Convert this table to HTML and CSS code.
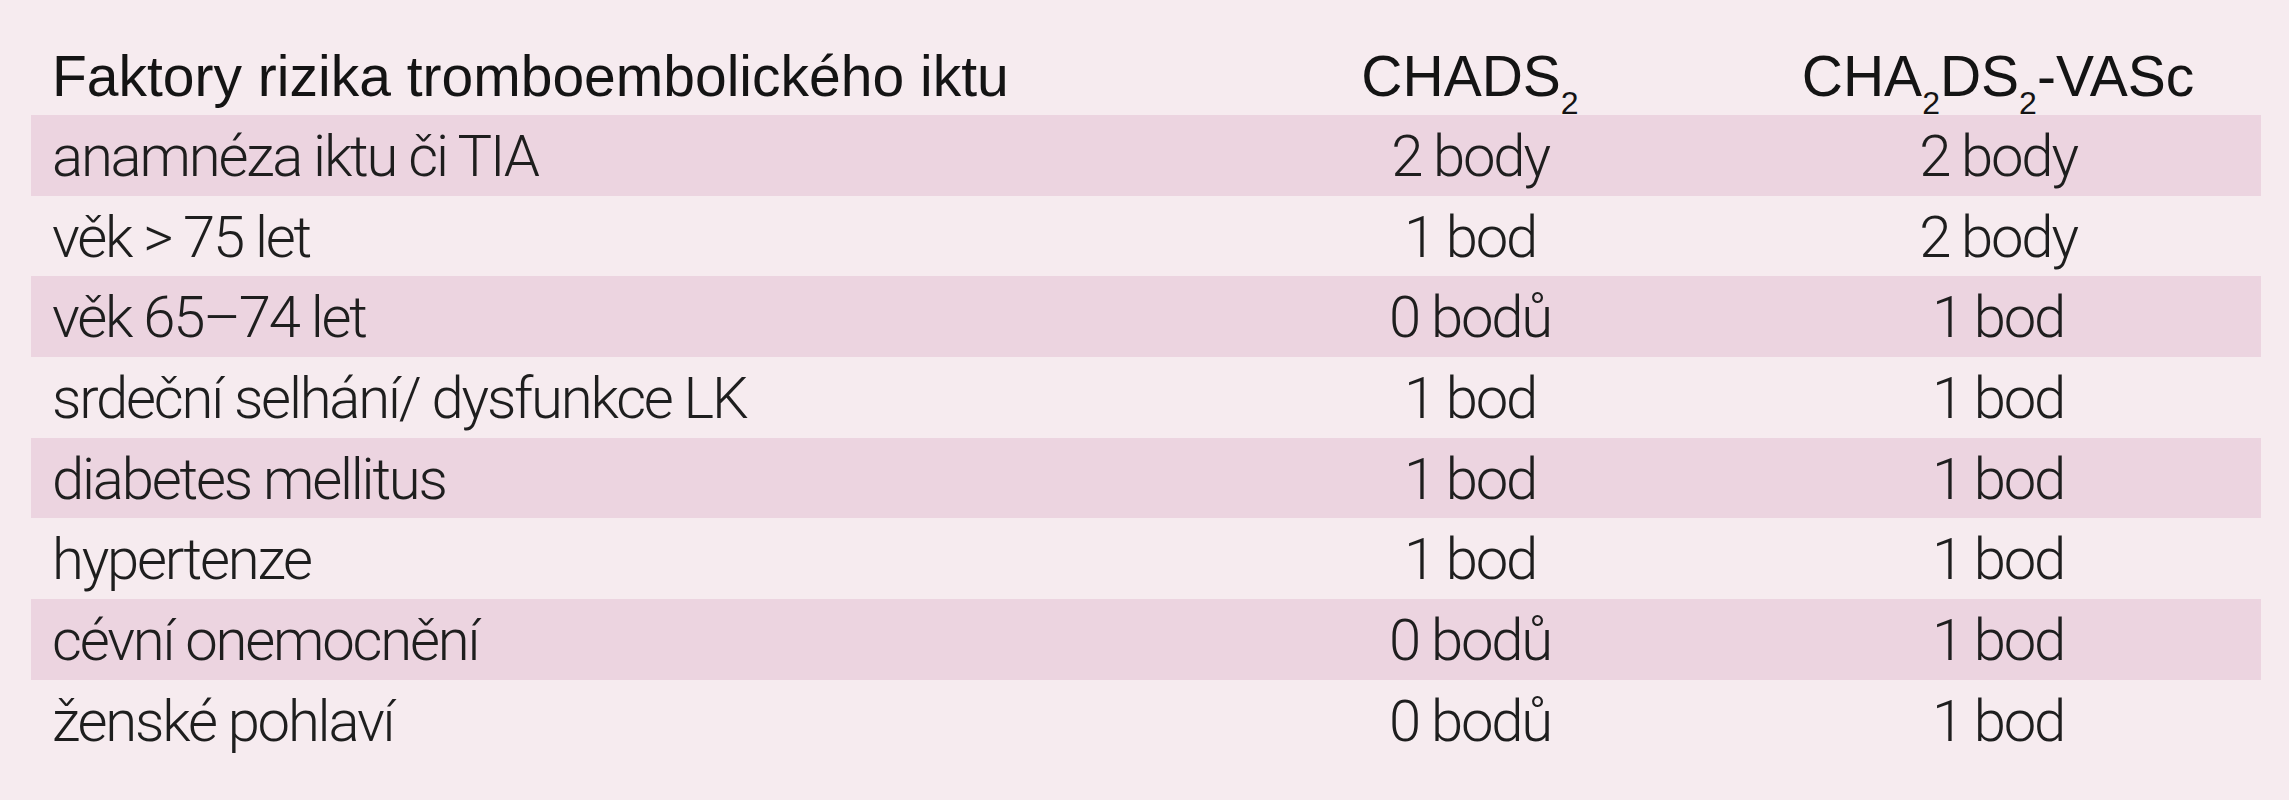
FILE: index.html
```html
<!DOCTYPE html>
<html lang="cs">
<head>
<meta charset="utf-8">
<title>Faktory rizika tromboembolického iktu</title>
<link rel="stylesheet" href="styles.css">
</head>
<body>
<div class="table">
  <div class="row head">
    <div class="cell name">Faktory rizika tromboembolického iktu</div>
    <div class="cell val">CHADS<sub>2</sub></div>
    <div class="cell val">CHA<sub>2</sub>DS<sub>2</sub>-VASc</div>
  </div>
  <div class="row alt">
    <div class="cell name">anamnéza iktu či TIA</div>
    <div class="cell val">2 body</div>
    <div class="cell val">2 body</div>
  </div>
  <div class="row">
    <div class="cell name">věk &gt; 75 let</div>
    <div class="cell val">1 bod</div>
    <div class="cell val">2 body</div>
  </div>
  <div class="row alt">
    <div class="cell name">věk 65–74 let</div>
    <div class="cell val">0 bodů</div>
    <div class="cell val">1 bod</div>
  </div>
  <div class="row">
    <div class="cell name">srdeční selhání/ dysfunkce LK</div>
    <div class="cell val">1 bod</div>
    <div class="cell val">1 bod</div>
  </div>
  <div class="row alt">
    <div class="cell name">diabetes mellitus</div>
    <div class="cell val">1 bod</div>
    <div class="cell val">1 bod</div>
  </div>
  <div class="row">
    <div class="cell name">hypertenze</div>
    <div class="cell val">1 bod</div>
    <div class="cell val">1 bod</div>
  </div>
  <div class="row alt">
    <div class="cell name">cévní onemocnění</div>
    <div class="cell val">0 bodů</div>
    <div class="cell val">1 bod</div>
  </div>
  <div class="row">
    <div class="cell name">ženské pohlaví</div>
    <div class="cell val">0 bodů</div>
    <div class="cell val">1 bod</div>
  </div>
</div>
</body>
</html>
```
FILE: styles.css
```css
html, body {
  margin: 0;
  padding: 0;
}
body {
  background: #f6ebef;
  width: 2289px;
  height: 800px;
  overflow: hidden;
  font-family: "Liberation Sans", Arial, sans-serif;
}
.table {
  padding: 34.33px 28px 0 31px;
}
.row {
  display: grid;
  grid-template-columns: 1174px 530px 526px;
  height: 80.67px;
  box-sizing: border-box;
  padding-top: 3px;
  line-height: 77.67px;
  font-family: Roboto, "Liberation Sans", sans-serif;
  font-weight: 300;
  font-size: 58px;
  letter-spacing: -2.2px;
  color: #1e1e1e;
  white-space: nowrap;
}
.row.alt {
  background: #ecd4e0;
}
.row.head {
  font-family: "Liberation Sans", Arial, sans-serif;
  font-weight: 400;
  font-size: 57px;
  letter-spacing: 0;
  color: #141414;
  padding-top: 4px;
  line-height: 76.67px;
}
.cell.name {
  padding-left: 21px;
}
.cell.val {
  text-align: center;
}
sub {
  font-size: 32px;
  line-height: 0;
  vertical-align: -18px;
}
```
